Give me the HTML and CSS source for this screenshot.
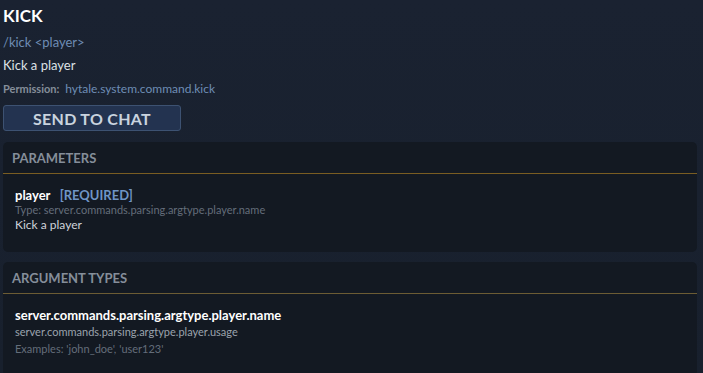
FILE: index.html
```html
<!DOCTYPE html>
<html lang="en">
  <head>
    <meta charset="UTF-8" />
    <meta name="viewport" content="width=device-width, initial-scale=1.0" />
    <title>Command - kick</title>
    <link rel="stylesheet" href="styles.css">
  </head>
  <body>
    <div class="command-detail">
      <h1 class="command-title">KICK</h1>
      <div class="command-usage">/kick &lt;player&gt;</div>
      <p class="command-desc">Kick a player</p>
      <div class="command-perm">
        <span class="perm-label">Permission:</span>
        <span class="perm-value">hytale.system.command.kick</span>
      </div>
      <button class="send-button">SEND TO CHAT</button>

      <section class="panel">
        <h2 class="panel-header">PARAMETERS</h2>
        <div class="panel-body">
          <div class="param">
            <div class="param-head">
              <span class="param-name">player</span>
              <span class="param-required">[REQUIRED]</span>
            </div>
            <div class="param-type">Type: server.commands.parsing.argtype.player.name</div>
            <div class="param-desc">Kick a player</div>
          </div>
        </div>
      </section>

      <section class="panel">
        <h2 class="panel-header">ARGUMENT TYPES</h2>
        <div class="panel-body">
          <div class="argtype">
            <div class="argtype-name">server.commands.parsing.argtype.player.name</div>
            <div class="argtype-usage">server.commands.parsing.argtype.player.usage</div>
            <div class="argtype-examples">Examples: 'john_doe', 'user123'</div>
          </div>
        </div>
      </section>
    </div>
  </body>
</html>
```

FILE: styles.css
```css
* {
  margin: 0;
  padding: 0;
  box-sizing: border-box;
}

body {
  font-family: Lato, "Noto Sans", sans-serif;
  background: linear-gradient(180deg, #1a2231 0%, #18202d 100%);
  color: #ffffff;
  min-height: 100vh;
  overflow: hidden;
}

.command-detail {
  padding: 5px 6px 0 3px;
}

.command-title {
  font-size: 17px;
  font-weight: 700;
  line-height: 22px;
  color: #ffffff;
}

.command-usage {
  margin-top: 7px;
  font-size: 13px;
  line-height: 16px;
  color: #6e8db5;
}

.command-desc {
  margin-top: 7px;
  font-size: 13px;
  line-height: 16px;
  color: #dde1e6;
}

.command-perm {
  margin-top: 9px;
  font-size: 11px;
  line-height: 14px;
}

.perm-label {
  font-weight: 700;
  color: #858e9a;
  margin-right: 3px;
}

.perm-value {
  color: #6e8db5;
  font-size: 12px;
}

.send-button {
  display: block;
  margin-top: 9px;
  width: 178px;
  height: 26px;
  background: #233350;
  border: 1px solid #3d5272;
  border-radius: 3px;
  font-family: Lato, "Noto Sans", sans-serif;
  font-size: 16px;
  font-weight: 700;
  color: #c9d3df;
  letter-spacing: 0.3px;
  cursor: pointer;
}

.panel {
  margin-top: 11px;
  background: #131922;
  border-radius: 5px;
}

.panel + .panel {
  margin-top: 10px;
}

.panel-header {
  padding: 8px 9px 7px;
  font-size: 13px;
  font-weight: 700;
  line-height: 16px;
  color: #858e9a;
  border-bottom: 1px solid #7a5d22;
}

.panel + .panel .panel-header {
  border-bottom-color: #6c5c34;
}

.panel-body {
  padding: 13px 12px 20px;
}

.param-head {
  font-size: 13px;
  line-height: 16px;
  font-weight: 700;
}

.param-name {
  color: #ffffff;
  margin-right: 6px;
}

.param-required {
  color: #6f95c6;
}

.param-type {
  font-size: 11px;
  line-height: 14px;
  color: #646d7a;
}

.param-desc {
  font-size: 12px;
  line-height: 15px;
  color: #cfd4da;
}

.argtype-name {
  font-size: 13px;
  line-height: 16px;
  font-weight: 700;
  color: #ffffff;
}

.argtype-usage {
  margin-top: 2px;
  font-size: 11px;
  line-height: 14px;
  color: #9ba3ad;
}

.argtype-examples {
  margin-top: 3px;
  font-size: 11px;
  line-height: 14px;
  color: #646d7a;
}
```
